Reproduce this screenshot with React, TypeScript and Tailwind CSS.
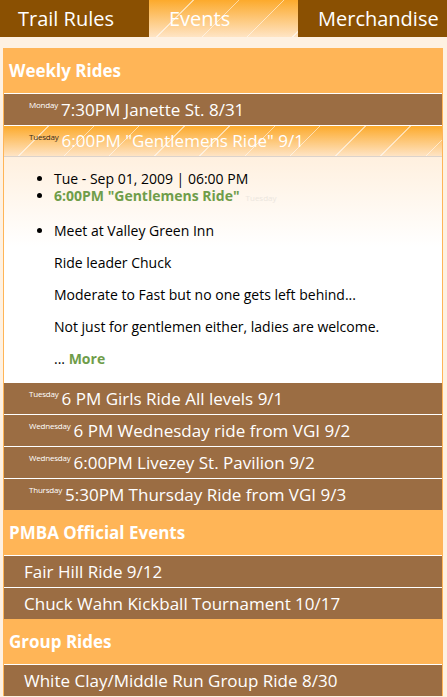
import React from 'react'

const font = "font-['Open_Sans',sans-serif]"

const stripes =
  'bg-[repeating-linear-gradient(135deg,transparent_0_31px,rgba(255,255,255,0.55)_31px_32px),linear-gradient(to_bottom,#fcaa2c,#ffe4c4)]'

const weekly = [
  { day: 'Tuesday', title: '6 PM Girls Ride All levels 9/1' },
  { day: 'Wednesday', title: '6 PM Wednesday ride from VGI 9/2' },
  { day: 'Wednesday', title: '6:00PM Livezey St. Pavilion 9/2' },
  { day: 'Thursday', title: '5:30PM Thursday Ride from VGI 9/3' },
]

function Header({ children }: { children: React.ReactNode }) {
  return (
    <div className="flex h-[45px] items-center pl-[5px] text-[17px] font-bold text-white">
      {children}
    </div>
  )
}

function Row({ day, title }: { day?: string; title: string }) {
  return (
    <div className="flex h-[32px] items-center border-t border-white bg-[#9b6d43] pl-[20px] text-[17px] font-medium text-white">
      {day && <span className="mr-[3px] ml-[5px] self-start pt-[5px] text-[8px] tracking-[-0.2px]">{day}</span>}
      <span>{title}</span>
    </div>
  )
}

export default function App() {
  return (
    <div className={`${font} min-h-[697px] bg-[#fef1e2]`}>
      {/* Tabs */}
      <nav className="grid h-[37px] grid-cols-3 bg-[#8a5002] text-[20px] font-medium text-white">
        <div className="flex items-center pl-[18px]">Trail Rules</div>
        <div className={`flex items-center pl-[20px] ${stripes}`}>Events</div>
        <div className="flex items-center pl-[20px]">Merchandise</div>
      </nav>

      <div className="px-[3px] pt-[11px]">
        <div className="w-[440px] bg-[#ffb557] px-px">
          <Header>Weekly Rides</Header>
          <Row day="Monday" title="7:30PM Janette St. 8/31" />

          {/* Open item */}
          <div className={`flex h-[32px] items-center border-t border-white border-b border-b-[#dcd3cb] pl-[25px] text-[17px] font-medium text-white ${stripes}`}>
            <span className="mr-[3px] self-start pt-[5px] text-[8px] tracking-[-0.2px] text-[#3a2a1a]">Tuesday</span>
            <span>6:00PM "Gentlemens Ride" 9/1</span>
          </div>
          <div className="bg-[linear-gradient(to_bottom,#fff0df,#ffffff_90px)] pt-[13px] pb-[15px] pl-[50px] text-[14px] leading-[17px] text-black">
            <ul className="list-disc">
              <li>Tue - Sep 01, 2009 | 06:00 PM</li>
              <li>
                <span className="font-bold text-[#6f9d4a]">6:00PM "Gentlemens Ride"</span>
                <span className="ml-[6px] text-[8px] text-[#ece6de]">Tuesday</span>
              </li>
            </ul>
            <ul className="mt-[16px] list-disc">
              <li>Meet at Valley Green Inn</li>
            </ul>
            <p className="mt-[15px]">Ride leader Chuck</p>
            <p className="mt-[15px]">Moderate to Fast but no one gets left behind...</p>
            <p className="mt-[15px]">Not just for gentlemen either, ladies are welcome.</p>
            <p className="mt-[15px]">
              ... <span className="font-bold text-[#6f9d4a]">More</span>
            </p>
          </div>

          {weekly.map((r, i) => (
            <Row key={i} day={r.day} title={r.title} />
          ))}

          <Header>PMBA Official Events</Header>
          <Row title="Fair Hill Ride 9/12" />
          <Row title="Chuck Wahn Kickball Tournament 10/17" />

          <Header>Group Rides</Header>
          <Row title="White Clay/Middle Run Group Ride 8/30" />
        </div>
      </div>
    </div>
  )
}
